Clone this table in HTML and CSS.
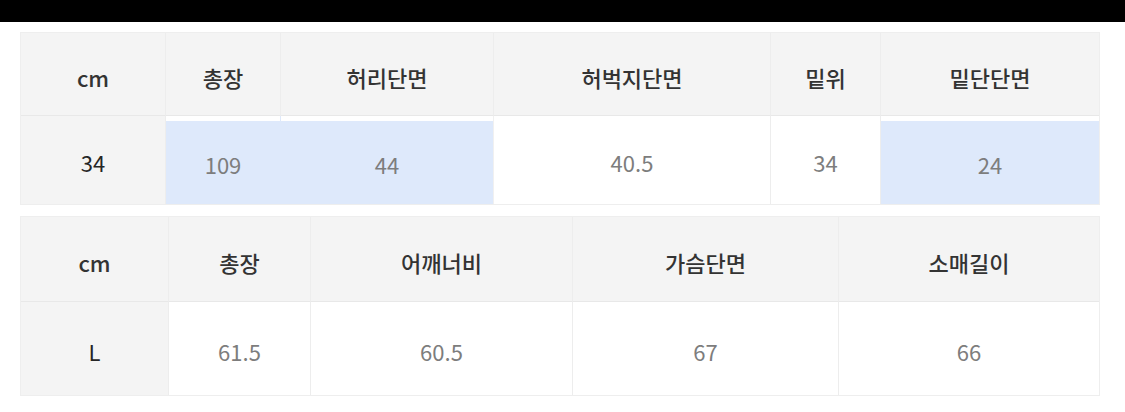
FILE: index.html
```html
<!DOCTYPE html>
<html lang="ko">
<head>
<meta charset="utf-8">
<link rel="stylesheet" href="styles.css">
</head>
<body>
<div class="topbar"></div>
<main class="page">
  <section class="size-table t1">
    <div class="cell head first">cm</div>
    <div class="cell head">총장</div>
    <div class="cell head">허리단면</div>
    <div class="cell head">허벅지단면</div>
    <div class="cell head">밑위</div>
    <div class="cell head last">밑단단면</div>
    <div class="cell data first">34</div>
    <div class="cell data hl">109</div>
    <div class="cell data hl">44</div>
    <div class="cell data">40.5</div>
    <div class="cell data">34</div>
    <div class="cell data hl last">24</div>
  </section>
  <section class="size-table t2">
    <div class="cell head first">cm</div>
    <div class="cell head">총장</div>
    <div class="cell head">어깨너비</div>
    <div class="cell head">가슴단면</div>
    <div class="cell head last">소매길이</div>
    <div class="cell data first">L</div>
    <div class="cell data">61.5</div>
    <div class="cell data">60.5</div>
    <div class="cell data">67</div>
    <div class="cell data last">66</div>
  </section>
</main>
</body>
</html>
```
FILE: styles.css
```css
* { box-sizing: border-box; }
html, body { margin: 0; padding: 0; background: #fff; }
body {
  font-family: "Noto Sans CJK KR", "Noto Sans", "Liberation Sans", sans-serif;
  width: 1125px;
  height: 412px;
  overflow: hidden;
}
.topbar { height: 22px; background: #000; }
.page {
  display: flex;
  flex-direction: column;
  gap: 11px;
  padding: 10px 0 0 20px;
}
.size-table {
  display: grid;
  width: 1080px;
  border: 1px solid #eeeeee;
  background: #fff;
}
.t1 {
  grid-template-columns: 145px 115px 213px 277px 110px 218px;
  grid-template-rows: 83px 88px;
}
.t2 {
  grid-template-columns: 148px 142px 262px 266px 260px;
  grid-template-rows: 85px 93px;
}
.cell {
  display: flex;
  align-items: center;
  justify-content: center;
  font-size: 22px;
  line-height: 1;
  border-right: 1px solid #ededed;
}
.cell.last { border-right: none; }
.head {
  background: #f4f4f4;
  color: #333;
  font-weight: 500;
  border-bottom: 1px solid #e8e8e8;
  padding-top: 6px;
}
.data {
  color: #7d7d7d;
  font-weight: 400;
  background: #fff;
  padding-top: 4px;
}
.data.first {
  background: #f4f4f4;
  color: #262626;
  font-weight: 400;
}
.data.hl {
  background: #dee9fb;
  box-shadow: inset 0 5px 0 #fff;
  border-right-color: #dee9fb;
  padding-top: 8px;
}
.t1 .data.hl:nth-child(9) { border-right-color: #f0f0f0; }
```
